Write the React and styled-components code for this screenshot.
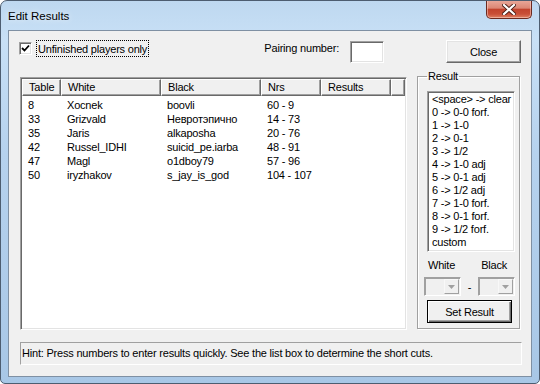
import styled, { createGlobalStyle } from 'styled-components';

const GlobalStyle = createGlobalStyle`
  html, body {
    margin: 0;
    padding: 0;
    background: #ffffff;
  }
  body {
    font-family: "Liberation Sans", Arial, sans-serif;
    font-size: 11px;
    letter-spacing: -0.2px;
    color: #000;
  }
`;

const Window = styled.div`
  width: 540px;
  height: 384px;
  box-sizing: border-box;
  display: flex;
  flex-direction: column;
  padding: 0 7px 6px;
  border: 1px solid #4d5d70;
  border-radius: 7px 7px 5px 5px;
  background: linear-gradient(180deg, #bed8f0 0%, #c8e0f6 10%, #b6d2ee 40%, #a8c7e6 100%);
  overflow: hidden;
`;

const TitleBar = styled.div`
  height: 29px;
  display: flex;
  justify-content: space-between;
  align-items: flex-start;
  flex-shrink: 0;
`;

const Title = styled.div`
  margin-top: 7px;
  font-size: 11.5px;
  letter-spacing: 0;
  line-height: 16px;
  color: #000;
  text-shadow: 0 0 6px rgba(255, 255, 255, 0.9);
`;

const CloseX = styled.div`
  width: 46px;
  height: 19px;
  margin-top: -1px;
  box-sizing: border-box;
  border: 1px solid #6b2a20;
  border-top: none;
  border-radius: 0 0 5px 5px;
  background: linear-gradient(180deg, #eaaa9c 0%, #dc8674 45%, #c2432d 52%, #c94f37 78%, #de8063 100%);
  box-shadow: inset 0 0 0 1px rgba(255, 220, 210, 0.5);
  display: flex;
  align-items: center;
  justify-content: center;
`;

const Client = styled.div`
  flex: 1;
  background: #f0f0f0;
  border: 1px solid #7f90a3;
  padding: 9px 10px 11px 11px;
  display: flex;
  flex-direction: column;
`;

const TopRow = styled.div`
  height: 23px;
  display: flex;
  align-items: flex-start;
`;

const CheckWrap = styled.label`
  display: flex;
  align-items: flex-start;
  margin-left: -1px;
`;

const CheckBox = styled.span`
  width: 13px;
  height: 13px;
  box-sizing: border-box;
  margin-top: 2px;
  background: #fff;
  border: 1px solid;
  border-color: #a0a0a0 #ffffff #ffffff #a0a0a0;
  box-shadow: inset 1px 1px 0 #696969, inset -1px -1px 0 #e3e3e3;
  display: flex;
  align-items: center;
  justify-content: center;
`;

const FocusLabel = styled.span`
  margin-left: 4px;
  padding: 0 1px;
  height: 17px;
  line-height: 16px;
  border: 1px dotted #000;
  box-sizing: border-box;
`;

const PairingLabel = styled.span`
  margin-left: auto;
  margin-top: 1px;
  line-height: 14px;
`;

const TextBox = styled.div`
  width: 34px;
  height: 22px;
  box-sizing: border-box;
  margin-left: 11px;
  margin-top: 1px;
  background: #fff;
  border: 1px solid;
  border-color: #a0a0a0 #ffffff #ffffff #a0a0a0;
  box-shadow: inset 1px 1px 0 #696969, inset -1px -1px 0 #e3e3e3;
`;

const Button = styled.button`
  width: ${(p) => p.$w}px;
  height: 23px;
  margin-left: ${(p) => p.$ml || 0}px;
  margin-top: ${(p) => p.$mt || 0}px;
  padding: 0;
  font: inherit;
  letter-spacing: inherit;
  color: #000;
  background: #f0f0f0;
  box-sizing: border-box;
  border: 1px solid;
  border-color: ${(p) => (p.$default ? '#000' : '#ffffff #696969 #696969 #ffffff')};
  box-shadow: ${(p) =>
    p.$default
      ? 'inset 1px 1px 0 #ffffff, inset -1px -1px 0 #696969, inset -2px -2px 0 #a0a0a0'
      : 'inset -1px -1px 0 #a0a0a0, inset 1px 1px 0 #e3e3e3'};
`;

const MainRow = styled.div`
  margin-top: 7px;
  height: 260px;
  display: flex;
  align-items: flex-start;
`;

const ListView = styled.div`
  width: 387px;
  height: 253px;
  margin-top: 7px;
  box-sizing: border-box;
  background: #fff;
  border: 1px solid;
  border-color: #a0a0a0 #ffffff #ffffff #a0a0a0;
  box-shadow: inset 1px 1px 0 #696969, inset -1px -1px 0 #e3e3e3;
  padding: 1px;
  display: flex;
  flex-direction: column;
`;

const Header = styled.div`
  display: flex;
  height: 17px;
  flex-shrink: 0;
`;

const HeaderCell = styled.div`
  width: ${(p) => (p.$w ? `${p.$w}px` : 'auto')};
  flex: ${(p) => (p.$w ? '0 0 auto' : '1')};
  box-sizing: border-box;
  padding-left: 6px;
  line-height: 15px;
  background: #f0f0f0;
  border: 1px solid;
  border-color: #ffffff #696969 #696969 #ffffff;
  box-shadow: inset -1px -1px 0 #a0a0a0;
  white-space: nowrap;
  overflow: hidden;
`;

const Rows = styled.div`
  padding-top: 2px;
`;

const Row = styled.div`
  display: flex;
  height: 14px;
  line-height: 14px;
`;

const Cell = styled.div`
  width: ${(p) => p.$w}px;
  box-sizing: border-box;
  padding-left: 6px;
  white-space: nowrap;
  overflow: hidden;
`;

const Group = styled.fieldset`
  width: 103px;
  height: 259px;
  box-sizing: border-box;
  margin: 0 0 0 10px;
  padding: 0;
  border: 1px solid #a0a0a0;
  box-shadow: 1px 1px 0 #ffffff, inset 1px 1px 0 #ffffff;
`;

const Legend = styled.legend`
  margin-left: 9px;
  padding: 0 1px;
  line-height: 13px;
`;

const GroupBody = styled.div`
  display: flex;
  flex-direction: column;
  padding-left: 9px;
`;

const ListBox = styled.div`
  width: 88px;
  height: 161px;
  margin-top: 8px;
  box-sizing: border-box;
  background: #fff;
  border: 1px solid;
  border-color: #a0a0a0 #ffffff #ffffff #a0a0a0;
  box-shadow: inset 1px 1px 0 #696969, inset -1px -1px 0 #e3e3e3;
  padding: 1px 0 0 4px;
  overflow: hidden;
`;

const Item = styled.div`
  height: 13px;
  line-height: 13px;
  white-space: nowrap;
`;

const Labels = styled.div`
  margin-top: 6px;
  display: flex;
  line-height: 14px;
  padding-left: 1px;
  gap: 26px;
`;

const ComboRow = styled.div`
  margin-top: 5px;
  margin-left: -3px;
  display: flex;
  align-items: center;
`;

const Combo = styled.div`
  width: 37px;
  height: 19px;
  box-sizing: border-box;
  background: #f0f0f0;
  border: 1px solid;
  border-color: #a0a0a0 #ffffff #ffffff #a0a0a0;
  box-shadow: inset 1px 1px 0 #a0a0a0;
  display: flex;
  justify-content: flex-end;
  padding: 1px;
`;

const ComboArrow = styled.div`
  width: 15px;
  box-sizing: border-box;
  background: #f0f0f0;
  border: 1px solid;
  border-color: #f8f8f8 #a0a0a0 #a0a0a0 #f8f8f8;
  display: flex;
  align-items: center;
  justify-content: center;
`;

const Dash = styled.span`
  width: 17px;
  text-align: center;
  line-height: 14px;
`;

const Hint = styled.div`
  margin-top: 12px;
  margin-right: -1px;
  height: 23px;
  box-sizing: border-box;
  border: 1px solid;
  border-color: #a0a0a0 #ffffff #ffffff #a0a0a0;
  line-height: 21px;
  padding-left: 1px;
  white-space: nowrap;
`;

const columns = [
  { title: 'Table', w: 39 },
  { title: 'White', w: 100 },
  { title: 'Black', w: 100 },
  { title: 'Nrs', w: 60 },
  { title: 'Results', w: 70 },
];

const pairings = [
  ['8', 'Xocnek', 'boovli', '60 - 9', ''],
  ['33', 'Grizvald', 'Невротэпично', '14 - 73', ''],
  ['35', 'Jaris', 'alkaposha', '20 - 76', ''],
  ['42', 'Russel_IDHI', 'suicid_pe.iarba', '48 - 91', ''],
  ['47', 'Magl', 'o1dboy79', '57 - 96', ''],
  ['50', 'iryzhakov', 's_jay_is_god', '104 - 107', ''],
];

const shortcuts = [
  '<space> -> clear',
  '0 -> 0-0 forf.',
  '1 -> 1-0',
  '2 -> 0-1',
  '3 -> 1/2',
  '4 -> 1-0 adj',
  '5 -> 0-1 adj',
  '6 -> 1/2 adj',
  '7 -> 1-0 forf.',
  '8 -> 0-1 forf.',
  '9 -> 1/2 forf.',
  'custom',
];

function DropArrow() {
  return (
    <svg width="7" height="4" viewBox="0 0 7 4">
      <path d="M0 0 H7 L3.5 4 Z" fill="#a0a0a0" />
    </svg>
  );
}

export default function App() {
  return (
    <>
      <GlobalStyle />
      <Window>
        <TitleBar>
          <Title>Edit Results</Title>
          <CloseX>
            <svg width="14" height="11" viewBox="0 0 14 11">
              <path d="M2 1 L12 10 M12 1 L2 10" stroke="#4a1c14" strokeWidth="4" strokeLinecap="square" />
              <path d="M2 1 L12 10 M12 1 L2 10" stroke="#ffffff" strokeWidth="2.2" strokeLinecap="square" />
            </svg>
          </CloseX>
        </TitleBar>
        <Client>
          <TopRow>
            <CheckWrap>
              <CheckBox>
                <svg width="9" height="9" viewBox="0 0 9 9">
                  <path d="M1 4 L3.5 6.5 L8 1.5" stroke="#000" strokeWidth="1.8" fill="none" />
                </svg>
              </CheckBox>
              <FocusLabel>Unfinished players only</FocusLabel>
            </CheckWrap>
            <PairingLabel>Pairing number:</PairingLabel>
            <TextBox />
            <Button $w={75} $ml={62}>Close</Button>
          </TopRow>
          <MainRow>
            <ListView>
              <Header>
                {columns.map((c) => (
                  <HeaderCell key={c.title} $w={c.w}>{c.title}</HeaderCell>
                ))}
                <HeaderCell />
              </Header>
              <Rows>
                {pairings.map((r) => (
                  <Row key={r[0]}>
                    {r.map((v, i) => (
                      <Cell key={i} $w={columns[i].w}>{v}</Cell>
                    ))}
                  </Row>
                ))}
              </Rows>
            </ListView>
            <Group>
              <Legend>Result</Legend>
              <GroupBody>
                <ListBox>
                  {shortcuts.map((s) => (
                    <Item key={s}>{s}</Item>
                  ))}
                </ListBox>
                <Labels>
                  <span>White</span>
                  <span>Black</span>
                </Labels>
                <ComboRow>
                  <Combo>
                    <ComboArrow><DropArrow /></ComboArrow>
                  </Combo>
                  <Dash>-</Dash>
                  <Combo>
                    <ComboArrow><DropArrow /></ComboArrow>
                  </Combo>
                </ComboRow>
                <Button $w={85} $mt={4} $default>Set Result</Button>
              </GroupBody>
            </Group>
          </MainRow>
          <Hint>Hint: Press numbers to enter results quickly. See the list box to determine the short cuts.</Hint>
        </Client>
      </Window>
    </>
  );
}
